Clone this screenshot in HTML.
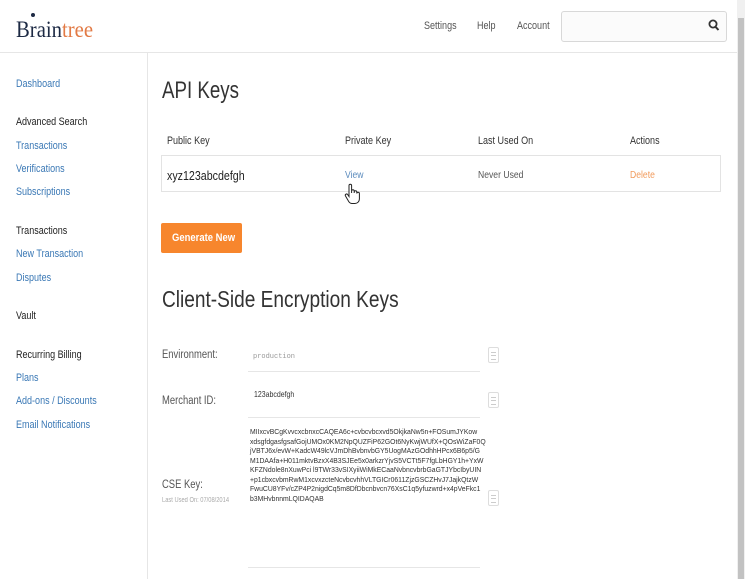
<!DOCTYPE html>
<html><head><style>
*{margin:0;padding:0;box-sizing:border-box}
body{width:745px;height:579px;overflow:hidden;background:#fff;font-family:"Liberation Sans",sans-serif;position:relative;color:#333}
.a{position:absolute;white-space:nowrap}
.s{transform:scaleX(.82);transform-origin:0 0}
.nav{font-size:11px;color:#555}
.side{font-size:11px;color:#3a78b5}
.sh{font-size:11px;color:#222}
.lbl{font-size:11.5px;color:#555}
.hd{font-size:11px;color:#333}
.line{position:absolute;height:1px;background:#e6e6e6}
.doc{position:absolute;width:11px;height:16px;border:1px solid #ddd;border-radius:2px}
.doc:after{content:"";position:absolute;left:2px;top:4px;width:5px;height:6px;border-top:1px solid #ccc;border-bottom:1px solid #ccc}
.doc:before{content:"";position:absolute;left:2px;top:7px;width:5px;height:1px;background:#ccc}
</style></head><body>
<div class="a s" style="left:16px;top:17px;font-family:'Liberation Serif',serif;font-size:23px;color:#1d2a44;transform:scaleX(.9)">Brain<span style="color:#e27a45">tree</span></div>
<div class="a" style="left:31px;top:13px;width:4px;height:4px;background:#1d2a44;border-radius:50%"></div>
<div class="a nav s" style="left:424px;top:20px">Settings</div>
<div class="a nav s" style="left:477px;top:20px">Help</div>
<div class="a nav s" style="left:517px;top:20px">Account</div>
<div class="a" style="left:561px;top:11px;width:166px;height:31px;border:1px solid #d8d8d8;border-radius:3px;background:#fbfbfb"></div>
<svg class="a" style="left:708px;top:19px" width="12" height="13" viewBox="0 0 12 13"><circle cx="5" cy="5" r="3.6" fill="none" stroke="#333" stroke-width="1.8"/><path d="M7.5 7.8L10.5 11" stroke="#333" stroke-width="2"/></svg>
<div class="a" style="left:737px;top:0;width:8px;height:579px;background:#f0f0f0"></div>
<div class="a" style="left:738px;top:18px;width:6px;height:561px;background:#c2c2c2"></div>
<div class="line" style="left:0;top:52px;width:737px"></div>
<div class="a" style="left:147px;top:53px;width:1px;height:526px;background:#e6e6e6"></div>

<div class="a side s" style="left:16px;top:78px">Dashboard</div>
<div class="a sh s" style="left:16px;top:116px">Advanced Search</div>
<div class="a side s" style="left:16px;top:140px">Transactions</div>
<div class="a side s" style="left:16px;top:163px">Verifications</div>
<div class="a side s" style="left:16px;top:186px">Subscriptions</div>
<div class="a sh s" style="left:16px;top:225px">Transactions</div>
<div class="a side s" style="left:16px;top:248px">New Transaction</div>
<div class="a side s" style="left:16px;top:272px">Disputes</div>
<div class="a sh s" style="left:16px;top:310px">Vault</div>
<div class="a sh s" style="left:16px;top:349px">Recurring Billing</div>
<div class="a side s" style="left:16px;top:372px">Plans</div>
<div class="a side s" style="left:16px;top:395px">Add-ons / Discounts</div>
<div class="a side s" style="left:16px;top:419px">Email Notifications</div>

<div class="a s" style="left:162px;top:77px;font-size:24px;color:#333;transform:scaleX(.78)">API Keys</div>
<div class="a hd s" style="left:167px;top:135px">Public Key</div>
<div class="a hd s" style="left:345px;top:135px">Private Key</div>
<div class="a hd s" style="left:478px;top:135px">Last Used On</div>
<div class="a hd s" style="left:630px;top:135px">Actions</div>
<div class="a" style="left:161px;top:155px;width:560px;height:37px;border:1px solid #e3e3e3"></div>
<div class="a s" style="left:167px;top:168px;font-size:13px;color:#222">xyz123abcdefgh</div>
<div class="a s" style="left:345px;top:169px;font-size:10.5px;color:#5b8bbd">View</div>
<div class="a s" style="left:478px;top:169px;font-size:10.5px;color:#555">Never Used</div>
<div class="a s" style="left:630px;top:169px;font-size:10.5px;color:#f19a5b">Delete</div>
<svg class="a" style="left:343px;top:183px" width="18" height="22" viewBox="0 0 18 22"><path d="M6 2.5a1.3 1.3 0 0 1 2.6 0V10V8a1.3 1.3 0 0 1 2.6 0v2V9a1.3 1.3 0 0 1 2.6 0v1.5a1.3 1.3 0 0 1 2.6 0V16c0 2.5-2 4.5-4.5 4.5H9c-1.5 0-2.5-.8-3.3-2L2.5 13a1.3 1.3 0 0 1 2.2-1.4L6 13.5Z" fill="#fff" stroke="#222" stroke-width="1"/></svg>
<div class="a" style="left:161px;top:223px;width:81px;height:30px;background:#f7862d;border-radius:2px"></div>
<div class="a s" style="left:172px;top:232px;color:#fff;font-size:11px;font-weight:bold;transform:scaleX(.86)">Generate New</div>

<div class="a s" style="left:162px;top:286px;font-size:23px;color:#333;transform:scaleX(.83)">Client-Side Encryption Keys</div>
<div class="a lbl s" style="left:162px;top:349px">Environment:</div>
<div class="a" style="left:253px;top:353px;font-family:'Liberation Mono',monospace;font-size:7px;color:#999">production</div>
<div class="doc" style="left:488px;top:347px"></div>
<div class="line" style="left:248px;top:371px;width:232px"></div>
<div class="a lbl s" style="left:162px;top:395px">Merchant ID:</div>
<div class="a s" style="left:254px;top:389px;font-size:8.5px;color:#333">123abcdefgh</div>
<div class="doc" style="left:488px;top:392px"></div>
<div class="line" style="left:248px;top:417px;width:232px"></div>
<div class="a lbl s" style="left:162px;top:479px">CSE Key:</div>
<div class="a s" style="left:162px;top:497px;font-size:7px;color:#aaa">Last Used On: 07/08/2014</div>
<div class="a" style="left:250px;top:427px;font-size:7.6px;line-height:9.5px;color:#333;white-space:pre;transform:scaleX(.9);transform-origin:0 0">MIIxcvBCgKvvcxcbnxcCAQEA6c+cvbcvbcxvd5OkjkaNw5n+FOSumJYKow
xdsgfdgasfgsafGojUMOx0KM2NpQUZFiP62GOt6NyKwjWUfX+QOsWiZaF0Q
jVBTJ6x/evW+KadcW49lcVJmDhBvbnvbGY5UogMAzGOdhhHPcx6B6p5/G
M1DAAfa+H011mktvBzxX4B3SJEe5x0arkzrYjvS5VCTt5F7fgLbHGY1h+YxW
KFZNdole8nXuwPci l9TWr33vSIXyiiWiMkECaaNvbncvbrbGaGTJYbcIbyUIN
+p1cbxcvbmRwM1xcvxzcteNcvbcvhhVLTGICr0611ZjzGSCZHvJ7JajkQtzW
FwuCU8YFv/cZP4P2nigdCq5m8DfDbcnbvcn76XsC1q5yfuzwrd+x4pVeFkc1
b3MHvbnnmLQIDAQAB</div>
<div class="doc" style="left:488px;top:490px"></div>
<div class="line" style="left:248px;top:567px;width:232px"></div>
</body></html>
